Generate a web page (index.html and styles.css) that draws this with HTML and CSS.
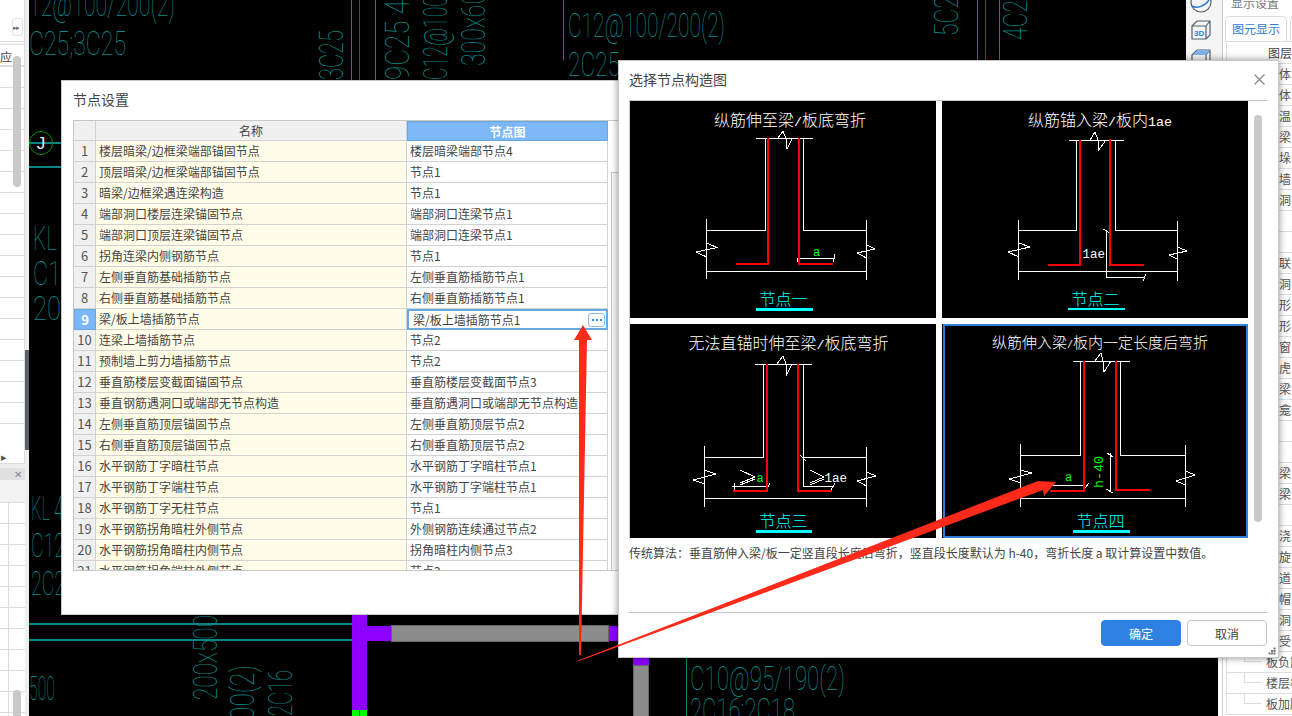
FILE: index.html
```html
<!DOCTYPE html>
<html lang="zh-CN">
<head>
<meta charset="utf-8">
<title>节点设置</title>
<link rel="stylesheet" href="styles.css">
</head>
<body>
<div class="app">
  <aside class="lp">
    <div class="lp-box lp-upper">
      <div class="lp-head"><span class="lp-expand">▸▸</span></div>
      <div class="lp-list"><div class="lp-first">应</div></div>
      <div class="lp-foot">▸</div>
    </div>
    <div class="lp-lower">
      <div class="lp-cap">✕</div>
      <div class="lp-tools"></div>
      <div class="lp-list2"></div>
    </div>
    <div class="lp-scroll lp-scroll-a"></div>
    <div class="lp-scroll lp-scroll-b"></div>
    <div class="lp-splitter"></div>
  </aside>

  <main class="cad">
    <svg class="cad-svg" viewBox="29 0 1189 716" width="1189" height="716">
      <g class="tl">
        <line x1="29" y1="143" x2="61" y2="143"/>
        <line x1="29" y1="167" x2="61" y2="167"/>
        <line x1="29" y1="624" x2="352" y2="624"/>
        <line x1="29" y1="640" x2="352" y2="640"/>
      </g>
      <g class="tl1">
        <line x1="351.5" y1="0" x2="351.5" y2="80"/>
        <line x1="375.5" y1="0" x2="375.5" y2="80"/>
        <line x1="563.5" y1="0" x2="563.5" y2="60"/>
        <line x1="977.5" y1="0" x2="977.5" y2="60"/>
        <line x1="999.5" y1="0" x2="999.5" y2="60"/>
        <line x1="686.5" y1="657" x2="686.5" y2="716"/>
      </g>
      <line class="rl" x1="359.5" y1="0" x2="359.5" y2="80"/>
      <line class="rl" x1="985.5" y1="0" x2="985.5" y2="60"/>
      <circle class="axis" cx="41" cy="143" r="11.5"/>
      <text class="axis-t" x="41" y="149">J</text>

      <text class="ct" x="29" y="16" textLength="146" lengthAdjust="spacingAndGlyphs">12@100/200(2)</text>
      <text class="ct" x="29" y="55" textLength="97" lengthAdjust="spacingAndGlyphs">C25;3C25</text>
      <text class="ct" x="33" y="250" textLength="24" lengthAdjust="spacingAndGlyphs">KL</text>
      <text class="ct" x="33" y="285" textLength="28" lengthAdjust="spacingAndGlyphs">C1</text>
      <text class="ct" x="33" y="320" textLength="28" lengthAdjust="spacingAndGlyphs">20</text>
      <text class="ct" x="31" y="520" textLength="32" lengthAdjust="spacingAndGlyphs">KL 4</text>
      <text class="ct" x="31" y="557" textLength="34" lengthAdjust="spacingAndGlyphs">C12</text>
      <text class="ct" x="31" y="595" textLength="34" lengthAdjust="spacingAndGlyphs">2C2</text>
      <text class="ct" x="29" y="700" textLength="26" lengthAdjust="spacingAndGlyphs">500</text>
      <text class="ct" x="568" y="37" textLength="157" lengthAdjust="spacingAndGlyphs">C12@100/200(2)</text>
      <text class="ct" x="568" y="76" textLength="52" lengthAdjust="spacingAndGlyphs">2C25</text>
      <text class="ct" x="690" y="690" textLength="155" lengthAdjust="spacingAndGlyphs">C10@95/190(2)</text>
      <text class="ct" x="690" y="722" textLength="105" lengthAdjust="spacingAndGlyphs">2C16;2C18</text>

      <text class="ct" transform="translate(343 80) rotate(-90)" textLength="50" lengthAdjust="spacingAndGlyphs">3C25</text>
      <text class="ct" transform="translate(409 80) rotate(-90)" textLength="80" lengthAdjust="spacingAndGlyphs">9C25 4</text>
      <text class="ct" transform="translate(447 80) rotate(-90)" textLength="84" lengthAdjust="spacingAndGlyphs">C12@100</text>
      <text class="ct" transform="translate(485 66) rotate(-90)" textLength="74" lengthAdjust="spacingAndGlyphs">300x60</text>
      <text class="ct" transform="translate(958 36) rotate(-90)" textLength="40" lengthAdjust="spacingAndGlyphs">5C2</text>
      <text class="ct" transform="translate(1027 40) rotate(-90)" textLength="40" lengthAdjust="spacingAndGlyphs">4C2</text>
      <text class="ct" transform="translate(217 700) rotate(-90)" textLength="85" lengthAdjust="spacingAndGlyphs">200x500</text>
      <text class="ct" transform="translate(254 720) rotate(-90)" textLength="55" lengthAdjust="spacingAndGlyphs">00(2)</text>
      <text class="ct" transform="translate(292 716) rotate(-90)" textLength="46" lengthAdjust="spacingAndGlyphs">2C16</text>

      <rect class="pu" x="352" y="614" width="15" height="96"/>
      <rect class="pu" x="367" y="626" width="24" height="15"/>
      <rect class="gy" x="391.5" y="625.5" width="217" height="16"/>
      <rect class="pu" x="609" y="626" width="10" height="15"/>
      <rect class="pu" x="633" y="657" width="16" height="8"/>
      <rect class="gy" x="633.5" y="665.5" width="15" height="52"/>
      <rect class="gr" x="352" y="710" width="15" height="6"/>
      <line class="rl" x1="359.5" y1="614" x2="359.5" y2="716"/>
    </svg>
  </main>

  <aside class="rp">
    <div class="rp-in">
      <div class="rp-title">显示设置</div>
      <div class="rp-tabs"><span class="rp-tab">图元显示</span><span class="rp-tab2"></span></div>
      <div class="rp-rows">
        <div class="rr rr-h">图层</div>
        <div class="rr">体</div>
        <div class="rr">体</div>
        <div class="rr">温</div>
        <div class="rr">梁</div>
        <div class="rr">垛</div>
        <div class="rr">墙</div>
        <div class="rr">洞</div>
        <div class="rr"></div>
        <div class="rr"></div>
        <div class="rr">联</div>
        <div class="rr">洞</div>
        <div class="rr">形</div>
        <div class="rr">形</div>
        <div class="rr">窗</div>
        <div class="rr">虎</div>
        <div class="rr">梁</div>
        <div class="rr">龛</div>
        <div class="rr"></div>
        <div class="rr"></div>
        <div class="rr">梁</div>
        <div class="rr">梁</div>
        <div class="rr"></div>
        <div class="rr">浇</div>
        <div class="rr">旋</div>
        <div class="rr">道</div>
        <div class="rr">帽</div>
        <div class="rr">洞</div>
        <div class="rr">受</div>
        <div class="rr rr-t">板负筋</div>
        <div class="rr rr-t">楼层板带</div>
        <div class="rr rr-t">板加腋</div>
      </div>
    </div>
  </aside>

  <div class="strip">
    <svg class="strip-ic" viewBox="0 0 24 60" width="24" height="60">
      <circle class="ic-s" cx="12" cy="2" r="10"/>
      <path class="ic-b" d="M3 6c5 3 13 0 17-6"/>
      <path class="ic-k" d="M3 26l5-5h13v14l-4 4H3zM3 26h14v13M17 26l4-5"/>
      <text class="ic-t" x="5" y="36">3D</text>
      <path class="ic-k" d="M3 55l5-5h13v14H3zM17 55v10M17 55l4-5"/>
      <path class="ic-top" d="M3.500 55l5-5h12.500l-4 5z"/>
    </svg>
  </div>

  <section class="dlg dlg1">
    <header class="d1-title">节点设置</header>
    <div class="tbl">
      <div class="row hd"><span class="ix"></span><span class="nm">名称</span><span class="val">节点图</span></div>
      <div class="row"><span class="ix">1</span><span class="nm">楼层暗梁/边框梁端部锚固节点</span><span class="val">楼层暗梁端部节点4</span></div>
      <div class="row"><span class="ix">2</span><span class="nm">顶层暗梁/边框梁端部锚固节点</span><span class="val">节点1</span></div>
      <div class="row"><span class="ix">3</span><span class="nm">暗梁/边框梁遇连梁构造</span><span class="val">节点1</span></div>
      <div class="row"><span class="ix">4</span><span class="nm">端部洞口楼层连梁锚固节点</span><span class="val">端部洞口连梁节点1</span></div>
      <div class="row"><span class="ix">5</span><span class="nm">端部洞口顶层连梁锚固节点</span><span class="val">端部洞口连梁节点1</span></div>
      <div class="row"><span class="ix">6</span><span class="nm">拐角连梁内侧钢筋节点</span><span class="val">节点1</span></div>
      <div class="row"><span class="ix">7</span><span class="nm">左侧垂直筋基础插筋节点</span><span class="val">左侧垂直筋插筋节点1</span></div>
      <div class="row"><span class="ix">8</span><span class="nm">右侧垂直筋基础插筋节点</span><span class="val">右侧垂直筋插筋节点1</span></div>
      <div class="row sel"><span class="ix">9</span><span class="nm">梁/板上墙插筋节点</span><span class="val">梁/板上墙插筋节点1<button class="more"><i></i><i></i><i></i></button></span></div>
      <div class="row"><span class="ix">10</span><span class="nm">连梁上墙插筋节点</span><span class="val">节点2</span></div>
      <div class="row"><span class="ix">11</span><span class="nm">预制墙上剪力墙插筋节点</span><span class="val">节点2</span></div>
      <div class="row"><span class="ix">12</span><span class="nm">垂直筋楼层变截面锚固节点</span><span class="val">垂直筋楼层变截面节点3</span></div>
      <div class="row"><span class="ix">13</span><span class="nm">垂直钢筋遇洞口或端部无节点构造</span><span class="val">垂直筋遇洞口或端部无节点构造</span></div>
      <div class="row"><span class="ix">14</span><span class="nm">左侧垂直筋顶层锚固节点</span><span class="val">左侧垂直筋顶层节点2</span></div>
      <div class="row"><span class="ix">15</span><span class="nm">右侧垂直筋顶层锚固节点</span><span class="val">右侧垂直筋顶层节点2</span></div>
      <div class="row"><span class="ix">16</span><span class="nm">水平钢筋丁字暗柱节点</span><span class="val">水平钢筋丁字暗柱节点1</span></div>
      <div class="row"><span class="ix">17</span><span class="nm">水平钢筋丁字端柱节点</span><span class="val">水平钢筋丁字端柱节点1</span></div>
      <div class="row"><span class="ix">18</span><span class="nm">水平钢筋丁字无柱节点</span><span class="val">节点1</span></div>
      <div class="row"><span class="ix">19</span><span class="nm">水平钢筋拐角暗柱外侧节点</span><span class="val">外侧钢筋连续通过节点2</span></div>
      <div class="row"><span class="ix">20</span><span class="nm">水平钢筋拐角暗柱内侧节点</span><span class="val">拐角暗柱内侧节点3</span></div>
      <div class="row"><span class="ix">21</span><span class="nm">水平钢筋拐角端柱外侧节点</span><span class="val">节点2</span></div>
      <div class="tbl-track"></div>
    </div>
  </section>

  <section class="dlg dlg2">
    <header class="d2-title"><span>选择节点构造图</span>
      <svg class="d2-x" viewBox="0 0 11 11" width="11" height="11"><path d="M.5.5l10 10M10.500.5l-10 10"/></svg>
    </header>
    <div class="d2-body">
      <div class="d2-grid">
        <div class="pn pn-top">
          <svg class="dg" viewBox="630 101 306 217" width="306" height="217">
            <text class="dt" x="790" y="126">纵筋伸至梁<tspan class="mono">/</tspan>板底弯折</text>
            <path class="w" d="M756 138.500H813M765.500 138V230.500H706M803.500 138V230.500H867M706.500 219V279M866.500 220V280M706 271.500H867"/>
            <path class="w" d="M778 138L783 131L786 139L787 149L792 139M706.500 243L717 247.500L696 252L706.500 257M866.500 245L875 249L857 253L866.500 258"/>
            <path class="w" d="M799 258.500H835M799 255L797 262M835 254L833 262"/>
            <path class="r" d="M768 138V264H736M799 138V264H833"/>
            <text class="dg-a" x="816.500" y="256">a</text>
            <text class="cap" x="783.500" y="305">节点一</text>
            <rect class="ul" x="756" y="308" width="57" height="3"/>
          </svg>
        </div>
        <div class="pn pn-top">
          <svg class="dg" viewBox="942 101 306 217" width="306" height="217">
            <text class="dt" x="1100" y="126">纵筋锚入梁<tspan class="mono">/</tspan>板内<tspan class="mono">1ae</tspan></text>
            <path class="w" d="M1069 140.500H1124M1076.500 140V230.500H1018M1115.500 140V230.500H1177M1018.500 220V280M1177.500 221V281M1018 271.500H1178"/>
            <path class="w" d="M1090 140L1095 132L1098 140L1098 151L1106 140M1019 243L1030 247L1008 252L1019 257M1177.500 247L1187 251L1169 255L1177.500 259"/>
            <path class="w" d="M1106.500 230V277.500H1145M1103 229L1110 233M1146 274L1143 281"/>
            <path class="r" d="M1080 140V265H1048M1110 139V265H1144"/>
            <text class="dl" x="1082.500" y="258">1ae</text>
            <text class="cap" x="1095.500" y="305">节点二</text>
            <rect class="ul" x="1068" y="308" width="57" height="2"/>
          </svg>
        </div>
        <div class="pn">
          <svg class="dg" viewBox="630 324 306 214" width="306" height="214">
            <text class="dt" x="788.500" y="349">无法直锚时伸至梁<tspan class="mono">/</tspan>板底弯折</text>
            <path class="w" d="M755 364.500H812M763.500 364V457.500H705M803.500 364V486.500H833M803.500 457.500H867M704.500 446V507M866.500 447V507M705 498.500H867"/>
            <path class="w" d="M777 364L783 356L786 364L786 376L792 364M704.500 470L716 474L693 480L704.500 484M866.500 472L876 476L857 481L866.500 486"/>
            <path class="w" d="M732 486.500H768M734 483V490M770 483L766 490M740 470L755 477L740 483M740 485L755 479M810 470L824 477L810 483M810 485L824 479M835 483L831 490M800 455L806 461"/>
            <path class="r" d="M767 364V491H733M798 364V491H832"/>
            <text class="dg-a" x="760" y="482">a</text>
            <text class="dl" x="824.500" y="482">1ae</text>
            <text class="cap" x="783.500" y="527">节点三</text>
            <rect class="ul" x="756" y="530" width="56" height="3"/>
          </svg>
        </div>
        <div class="pn pn-sel">
          <svg class="dg" viewBox="942 324 306 214" width="306" height="214">
            <text class="dt dt-sm" x="1100" y="348">纵筋伸入梁<tspan class="mono">/</tspan>板内一定长度后弯折</text>
            <path class="w" d="M1073 361.500H1130M1080.500 361V455.500H1021M1120.500 361V455.500H1186M1020.500 444V507M1185.500 445V507M1021 498.500H1186"/>
            <path class="w" d="M1095 361L1101 353L1103 361L1104 372L1111 361M1020.500 470L1032 473L1009 479L1020.500 483M1185.500 471L1195 475L1176 481L1185.500 485"/>
            <path class="w" d="M1050 485.500H1084M1083 491L1089 483M1110.500 453V492M1107 453L1113 457M1106 489L1113 493"/>
            <path class="r" d="M1084 361V491H1050M1116 361V490H1150"/>
            <text class="dg-a" x="1068.500" y="481">a</text>
            <text class="dg-r" transform="translate(1103 488) rotate(-90)">h-40</text>
            <text class="cap" x="1100.500" y="527">节点四</text>
            <rect class="ul" x="1073" y="530" width="57" height="3"/>
          </svg>
        </div>
      </div>
      <div class="d2-track"><div class="d2-thumb"></div></div>
    </div>
    <p class="d2-desc">传统算法：垂直筋伸入梁/板一定竖直段长度后弯折，竖直段长度默认为 h-40，弯折长度 a 取计算设置中数值。</p>
    <footer class="d2-foot">
      <button class="btn btn-ok">确定</button>
      <button class="btn btn-no">取消</button>
    </footer>
    <svg class="grip" viewBox="0 0 8 8" width="8" height="8"><path d="M5.500 .5h2v2h-2zM3 3h2v2H3zM5.500 3h2v2h-2zM.5 5.500h2v2h-2zM3 5.500h2v2H3zM5.500 5.500h2v2h-2z"/></svg>
  </section>

  <svg class="arrows" viewBox="0 0 1292 716" width="1292" height="716">
    <polygon points="579,655 579,340 574,340 583,325 592,340 587,340 581,655"/>
    <polygon points="578,660.500 1038,481 1056,482 1044,496 1043,490 578,661.500"/>
  </svg>
</div>
</body>
</html>
```
FILE: styles.css
```css
* { box-sizing: border-box; }
html, body { margin: 0; padding: 0; background: #000; }
body { font-family: "Noto Sans CJK SC", "Liberation Sans", sans-serif; font-size: 12px; color: #444; }
.app { position: relative; width: 1292px; height: 716px; overflow: hidden; display: flex; background: #000; }

/* left panel */
.lp { position: relative; flex: 0 0 29px; background: #eee; display: flex; flex-direction: column; }
.lp-box { width: 25px; background: #fff; border-right: 1px solid #ddd; }
.lp-upper { height: 464px; border-bottom: 1px solid #ddd; display: flex; flex-direction: column; }
.lp-head { height: 42px; border-bottom: 1px solid #ddd; padding: 18px 0 0 12px; }
.lp-expand { display: block; width: 11px; height: 18px; border: 1px solid #e2e2e2; border-radius: 3px; font-size: 7px; line-height: 16px; letter-spacing: -1px; color: #666; overflow: hidden; }
.lp-list { flex: 1; background: repeating-linear-gradient(to bottom, #fff 0 20px, #ddd 20px 21px) 0 4px; }
.lp-first { height: 21px; padding-top: 3px; margin-top: 3px; background: #fff; border-bottom: 1px solid #ddd; line-height: 18px; overflow: hidden; white-space: nowrap; }
.lp-foot { height: 21px; font-size: 11px; line-height: 28px; color: #555; background: #fff; padding-left: 1px; overflow: hidden; }
.lp-lower { margin-top: 4px; width: 25px; flex: 1; display: flex; flex-direction: column; background: #fff; }
.lp-cap { height: 12px; background: #e1e1e1; font-size: 10px; line-height: 12px; text-align: right; padding-right: 3px; color: #888; }
.lp-tools { height: 23px; background: #f3f3f3; border-bottom: 1px solid #ddd; }
.lp-list2 { flex: 1; background: linear-gradient(#ddd, #ddd) 8px 0 / 1px 100% no-repeat, repeating-linear-gradient(to bottom, #fff 0 20px, #ddd 20px 21px); }
.lp-scroll { position: absolute; left: 13px; width: 8px; background: #c9c9c9; border-radius: 4px; }
.lp-scroll-a { top: 56px; height: 131px; }
.lp-scroll-b { top: 690px; height: 40px; }
.lp-splitter { position: absolute; left: 25px; top: 350px; width: 4px; height: 100px; background: #5b6068; }

/* CAD canvas */
.cad { flex: 0 0 1189px; background: #000; }
.cad-svg { display: block; }
.tl line { stroke: #078585; stroke-width: 2; }
.tl1 line { stroke: #078585; stroke-width: 1; }
.rl { stroke: #c4161c; stroke-width: 1; }
.axis { fill: none; stroke: #0a8f0a; stroke-width: 1; }
.axis-t { fill: #eee; font: 17px "Liberation Sans", sans-serif; text-anchor: middle; }
.ct { fill: #0b8b8b; font-family: "Roboto", "Liberation Sans", sans-serif; font-weight: 100; font-size: 34px; }
.pu { fill: #8b00ff; }
.gy { fill: #8c8c8c; stroke: #666; stroke-width: 1; }
.gr { fill: #00ff00; }

/* right panel */
.rp { flex: 0 0 74px; background: #fff; padding-left: 4px; overflow: hidden; }
.rp-in { height: 716px; border-left: 1px solid #ccc; padding-left: 2px; overflow: hidden; }
.rp-title { height: 16px; line-height: 6px; padding-left: 6px; color: #777; white-space: nowrap; overflow: hidden; }
.rp-tabs { display: flex; height: 26px; gap: 3px; border-bottom: 1px solid #ddd; }
.rp-tab { width: 62px; height: 25px; border: 1px solid #ddd; border-bottom: 0; border-radius: 5px 5px 0 0; text-align: center; line-height: 24px; color: #2e7fd8; white-space: nowrap; flex: none; }
.rp-tab2 { width: 20px; height: 25px; border: 1px solid #ddd; border-bottom: 0; border-radius: 5px 5px 0 0; flex: none; }
.rp-rows { border-left: 1px solid #ddd; margin-left: 1px; margin-top: 1px; }
.rr { position: relative; height: 21px; border-bottom: 1px solid #ddd; padding-left: 52px; line-height: 20px; white-space: nowrap; overflow: hidden; color: #555; }
.rr-h { padding-left: 41px; color: #444; }
.rr-t { padding-left: 39px; color: #555; }
.rr-t::before { content: ""; position: absolute; left: 17px; top: -2px; width: 17px; height: 11px; border-left: 1px solid #ddd; border-bottom: 1px solid #ddd; }

/* icon strip */
.strip { position: absolute; left: 1186px; top: 0; width: 36px; height: 300px; background: #f5f5f5; padding: 0 0 0 3px; }
.strip-ic { display: block; }
.ic-s { fill: none; stroke: #556070; stroke-width: 1.2; }
.ic-b { fill: none; stroke: #2e7fd8; stroke-width: 1.5; }
.ic-k { fill: none; stroke: #556070; stroke-width: 1.2; }
.ic-top { fill: #7fb2ea; }
.ic-t { fill: #2e7fd8; font: bold 8px "Liberation Sans", sans-serif; }

/* dialogs */
.dlg { position: absolute; background: #fff; border: 1px solid #c8c8c8; }
.dlg1 { left: 61px; top: 80px; width: 560px; height: 535px; padding-left: 11px; overflow: hidden; }
.d1-title { height: 39px; font-size: 14px; line-height: 36px; color: #444; }
.tbl { position: relative; width: 560px; height: 451px; border: 1px solid #c8c8c8; border-right: 0; overflow: hidden; }
.row { display: grid; grid-template-columns: 22px 311px 201px; height: 21px; line-height: 20px; }
.row > span { border-right: 1px solid #d2d2d2; border-bottom: 1px solid #d2d2d2; white-space: nowrap; overflow: hidden; }
.ix { background: #f0f0f0; text-align: center; color: #555; font-size: 13px; }
.nm { background: #fffde8; padding-left: 3px; color: #444; }
.val { background: #fff; padding-left: 3px; color: #444; }
.hd { height: 20px; line-height: 19px; }
.hd .ix { background: #f0f0f0; }
.hd .nm { background: #f0f0f0; text-align: center; padding: 0; }
.hd .val { background: #7cb8f8; color: #fff; font-weight: 700; text-align: center; padding: 0; border: 1px solid #6aa9de; }
.sel .ix { background: #7cb8f8; color: #fff; font-weight: 700; border: 1px solid #6aa9de; }
.sel .val { display: flex; align-items: center; justify-content: space-between; border: 2px solid #6aa9de; padding: 0 1px 0 4px; }
.more { display: flex; align-items: center; justify-content: center; gap: 2px; width: 17px; height: 14px; padding: 0; background: #fff; border: 1px solid #8cb9e6; border-radius: 3px; }
.more i { display: block; width: 2px; height: 2px; background: #3d87d8; }
.tbl-track { position: absolute; left: 537px; top: 51px; width: 30px; height: 400px; background: #f7f7f7; border: 1px solid #c8c8c8; }

.dlg2 { left: 618px; top: 60px; width: 661px; height: 598px; box-shadow: 0 0 7px rgba(0, 0, 0, .45); }
.d2-title { height: 39px; display: flex; align-items: center; justify-content: space-between; padding: 0 13px 3px 10px; font-size: 14px; color: #444; }
.d2-x path { fill: none; stroke: #888; stroke-width: 1.2; }
.d2-body { display: flex; margin-left: 10px; width: 638px; border-top: 1px solid #c8c8c8; border-left: 1px solid #c8c8c8; height: 439px; }
.d2-grid { display: grid; grid-template-columns: 306px 306px; grid-template-rows: 217px 214px; gap: 6px; flex: none; }
.pn { position: relative; background: #000; }
.pn-sel::after { content: ""; position: absolute; inset: 0 0 0 1px; border: 2px solid #2f7fd6; box-shadow: inset 0 0 0 1px #000; }
.dg { display: block; }
.dt { fill: #fff; font-size: 16px; font-weight: 300; text-anchor: middle; }
.dt-sm { font-size: 15px; }
.mono { font-family: "Liberation Mono", monospace; font-size: 13.33px; }
.dt-sm .mono { font-size: 10px; }
.cap { fill: #00ffff; font-size: 16px; font-weight: 300; text-anchor: middle; }
.ul { fill: #00ffff; }
.w { fill: none; stroke: #fff; stroke-width: 1; shape-rendering: crispEdges; }
.r { fill: none; stroke: #ff0000; stroke-width: 2; shape-rendering: crispEdges; }
.dg-a { fill: #00ff00; font: 12px "Liberation Mono", monospace; text-anchor: middle; }
.dg-r { fill: #00ff00; font: 13.33px "Liberation Mono", monospace; }
.dl { fill: #fff; font: 12.5px "Liberation Mono", monospace; }
.d2-track { flex: 1; position: relative; }
.d2-thumb { width: 8px; height: 407px; margin: 14px 0 0 6px; background: #c9c9c9; border-radius: 4px; }
.d2-desc { height: 73px; margin: 0 0 0 10px; padding-top: 5px; line-height: 18px; color: #444; white-space: nowrap; }
.d2-foot { display: flex; justify-content: flex-end; gap: 6px; margin: 0 11px 0 10px; padding-top: 7px; border-top: 1px solid #c8c8c8; }
.btn { width: 80px; height: 26px; padding: 0; border-radius: 4px; font: 12px "Noto Sans CJK SC", sans-serif; }
.btn-ok { background: #2e80e2; border: 1px solid #2e80e2; color: #fff; }
.btn-no { background: #fff; border: 1px solid #c8c8c8; color: #444; }
.grip { position: absolute; right: 2px; bottom: 2px; fill: #777; }

.arrows { position: absolute; left: 0; top: 0; pointer-events: none; fill: #ff2a1a; }
```
